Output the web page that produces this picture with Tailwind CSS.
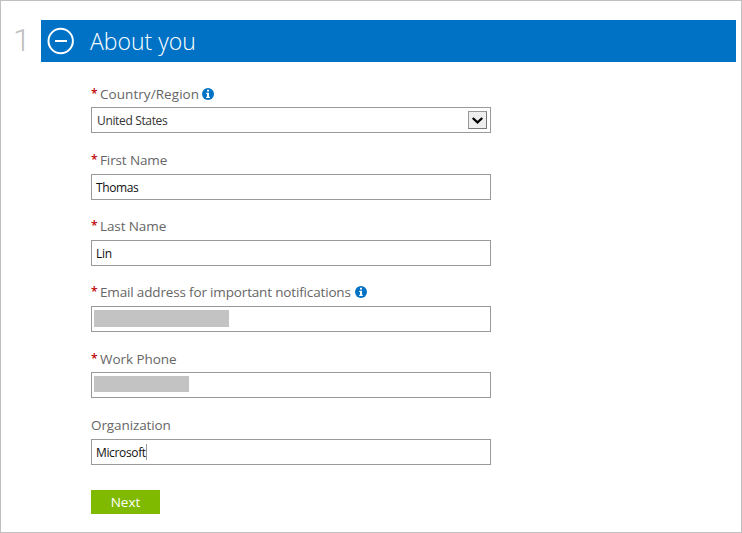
<!DOCTYPE html>
<html lang="en">
<head>
<meta charset="utf-8">
<title>About you</title>
<script src="https://cdn.jsdelivr.net/npm/@tailwindcss/browser@4"></script>
</head>
<body class="bg-white font-['Open_Sans','Noto_Sans',sans-serif]">
<main class="w-[742px] h-[533px] border border-[#c0c0c0] pt-[19px] overflow-hidden">
  <header class="flex h-[42px]">
    <div class="w-10 pl-3 font-[Roboto,sans-serif] text-[32px] leading-[40px] font-light text-[#c0c0c0]">1</div>
    <div class="flex w-[695px] items-center bg-[#0072c6] pl-1.5 text-white">
      <svg class="size-7 shrink-0" viewBox="0 0 28 28" fill="none" stroke="currentColor" stroke-width="2"><circle cx="13.7" cy="14" r="12.2"/><path d="M8 14h12"/></svg>
      <h1 class="ml-[15px] text-[23px] leading-[42px] font-light">About you</h1>
    </div>
  </header>
  <form class="ml-[90px] mt-[19px] w-[400px] text-[13.5px] text-[#666]">
    <div class="mb-[15px]">
      <label class="flex h-[26px] items-center"><span class="w-[9px] text-[12px] font-semibold text-[#c00000]">*</span><span class="tracking-[0.06px]">Country/Region</span>
        <svg class="ml-[3px] size-3" viewBox="0 0 12 12"><circle cx="6" cy="6" r="6" fill="#0072c6"/><path d="M5 1.7h2v1.8H5zM4.2 4.7H7v4h.8V10H4.2V8.7H5V6h-.8z" fill="#fff"/></svg></label>
      <div class="flex h-[26px] items-center justify-between border border-[#999] pl-[5px] pr-[3px] text-[12px] text-[#333]"><span class="pt-0.5 tracking-[-0.35px]">United States</span>
        <span class="flex h-[18px] w-[19px] items-center justify-center border border-[#777] border-t-[#999] border-l-[#999] bg-[#eee]"><svg class="h-[7px] w-[11px]" viewBox="0 0 11 7" fill="none" stroke="#000" stroke-width="2.2"><path d="M.7 1l4.8 4.4L10.3 1"/></svg></span></div>
    </div>
    <div class="mb-[14px]">
      <label class="flex h-[26px] items-center pb-0.5"><span class="w-[9px] text-[12px] font-semibold text-[#c00000]">*</span><span class="tracking-[-0.12px]">First Name</span></label>
      <div class="flex h-[26px] items-center border border-[#999] pl-1 pt-0.5 text-[12px] tracking-[-0.4px] text-[#111]">Thomas</div>
    </div>
    <div class="mb-[14px]">
      <label class="flex h-[26px] items-center pb-0.5"><span class="w-[9px] text-[12px] font-semibold text-[#c00000]">*</span><span class="tracking-[-0.1px]">Last Name</span></label>
      <div class="flex h-[26px] items-center border border-[#999] pl-1 pt-0.5 text-[12px] tracking-[-0.3px] text-[#111]">Lin</div>
    </div>
    <div class="mb-[14px]">
      <label class="flex h-[26px] items-center pb-0.5"><span class="w-[9px] text-[12px] font-semibold text-[#c00000]">*</span><span class="tracking-[-0.16px]">Email address for important notifications</span>
        <svg class="ml-1 size-3" viewBox="0 0 12 12"><circle cx="6" cy="6" r="6" fill="#0072c6"/><path d="M5 1.7h2v1.8H5zM4.2 4.7H7v4h.8V10H4.2V8.7H5V6h-.8z" fill="#fff"/></svg></label>
      <div class="h-[26px] border border-[#999] pl-0.5 pt-[3px]"><div class="h-[17px] w-[135px] bg-[#c3c3c3]"></div></div>
    </div>
    <div class="mb-[15px]">
      <label class="flex h-[26px] items-center"><span class="w-[9px] text-[12px] font-semibold text-[#c00000]">*</span><span class="tracking-[-0.05px]">Work Phone</span></label>
      <div class="h-[26px] border border-[#999] pl-0.5 pt-[3px]"><div class="h-4 w-[95px] bg-[#c3c3c3]"></div></div>
    </div>
    <div class="mb-[25px]">
      <label class="flex h-[26px] items-center pb-0.5 tracking-[-0.1px]">Organization</label>
      <div class="flex h-[26px] items-center border border-[#999] pl-1 text-[12px] text-[#111]"><span class="pt-0.5 tracking-[-0.35px]">Microsoft</span><span class="h-4 w-px bg-[#999]"></span></div>
    </div>
    <button type="button" class="block h-6 w-[69px] bg-[#7fba00] text-[13.5px] leading-6 text-white">Next</button>
  </form>
</main>
</body>
</html>
